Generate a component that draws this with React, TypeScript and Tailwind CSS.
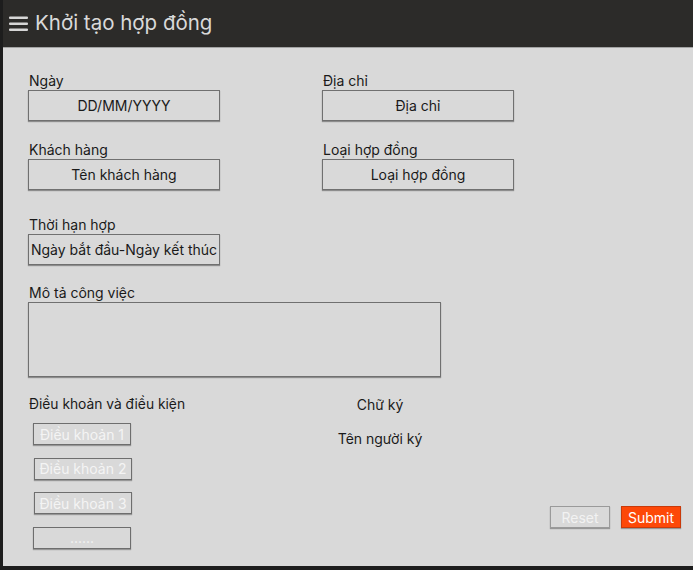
import React from 'react';

const boxCls =
  "h-[31px] w-[192px] border border-[#707070] bg-[#d9d9d9] shadow-[0_1px_1px_rgba(0,0,0,0.35)] flex items-center justify-center text-[14px] text-[#1a1a1a] whitespace-nowrap";

const Field = ({ label, value, className = "" }: { label: string; value: string; className?: string }) => (
  <div className={`flex flex-col ${className}`}>
    <span className="text-[14px] leading-[17px] text-[#1a1a1a] pl-[1px] mb-[1px]">{label}</span>
    <div className={boxCls}>{value}</div>
  </div>
);

const clauseBtn =
  "h-[22px] w-[98px] border border-[#6e6e6e] bg-[#d9d9d9] shadow-[0_1px_1px_rgba(0,0,0,0.3)] flex items-center justify-center text-[14px] text-[#f4f4f4]";

export default function App() {
  const clauses = ["Điều khoản 1", "Điều khoản 2", "Điều khoản 3", "......"];

  return (
    <div className="w-[693px] h-[570px] flex flex-col bg-[#d9d9d9] border-l-[3px] border-b-[4px] border-[#1d1d1d] overflow-hidden" style={{ fontFamily: 'Inter, "Noto Sans", sans-serif' }}>
      <header className="h-[48px] shrink-0 bg-[#2c2b29] border-b border-[#a3a3a3] flex items-center pl-[6px] pb-[1px]">
        <svg width="20" height="16" viewBox="0 0 20 16" className="mr-[6px] mt-[1px]">
          <rect x="0" y="0.5" width="19" height="2.6" rx="1" fill="#d6d6d6" />
          <rect x="0" y="6.5" width="19" height="2.6" rx="1" fill="#d6d6d6" />
          <rect x="0" y="12.5" width="19" height="2.6" rx="1" fill="#d6d6d6" />
        </svg>
        <h1 className="text-[20.5px] text-[#d9d9d9] leading-none">Khởi tạo hợp đồng</h1>
      </header>

      <main className="flex-1 flex flex-col pl-[25px] pt-[24px]">
        <div className="grid grid-cols-[192px_192px] gap-x-[102px]">
          <Field label="Ngày" value="DD/MM/YYYY" />
          <Field label="Địa chỉ" value="Địa chỉ" />
          <Field label="Khách hàng" value="Tên khách hàng" className="mt-[20px]" />
          <Field label="Loại hợp đồng" value="Loại hợp đồng" className="mt-[20px]" />
        </div>

        <Field label="Thời hạn hợp" value="Ngày bắt đầu-Ngày kết thúc" className="mt-[26px]" />

        <div className="flex flex-col mt-[19px]">
          <span className="text-[14px] leading-[17px] text-[#1a1a1a] pl-[1px] mb-[1px]">Mô tả công việc</span>
          <div className="h-[75px] w-[413px] border border-[#707070] bg-[#d9d9d9] shadow-[0_1px_1px_rgba(0,0,0,0.35)]" />
        </div>

        <div className="flex mt-[19px] flex-1">
          <div className="w-[300px] flex flex-col">
            <span className="text-[13.8px] leading-[17px] text-[#1a1a1a] pl-[1px]">Điều khoản và điều kiện</span>
            <div className="flex flex-col gap-[12.6px] mt-[10px] pl-[5px]">
              {clauses.map((c, i) => (
                <div key={c} className={`${clauseBtn} ${i === 1 || i === 2 ? 'ml-[1px]' : ''}`}>{c}</div>
              ))}
            </div>
          </div>
          <div className="w-[104px] flex flex-col items-center text-[14px] leading-[17px] text-[#1a1a1a]">
            <span>Chữ ký</span>
            <span className="mt-[17px]">Tên người ký</span>
          </div>
          <div className="flex-1 flex justify-end items-end gap-[11px] pr-[12px] pb-[38px]">
            <button className="h-[22px] w-[60px] border border-[#9a9a9a] bg-[#d9d9d9] shadow-[0_1px_1px_rgba(0,0,0,0.3)] text-[14px] text-[#f2f2f2] flex items-center justify-center">Reset</button>
            <button className="h-[22px] w-[60px] border border-[#c93a0a] bg-[#fd4808] shadow-[0_1px_1px_rgba(0,0,0,0.3)] text-[14px] text-white flex items-center justify-center">Submit</button>
          </div>
        </div>
      </main>
    </div>
  );
}
